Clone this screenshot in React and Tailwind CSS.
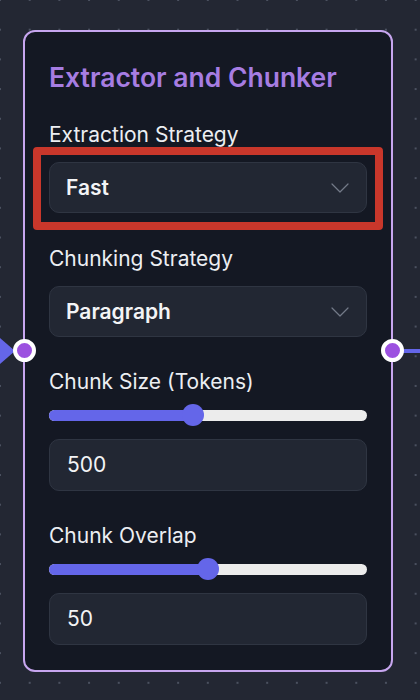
import React from "react";
import { ChevronDown } from "lucide-react";

const font = { fontFamily: "Inter, 'Noto Sans', sans-serif" };

function Select({ value }) {
  return (
    <div className="flex h-[51px] items-center justify-between rounded-[10px] border border-[#2f3542] bg-[#222733] pl-[16px] pr-[10px]">
      <span className="text-[21px] font-semibold leading-[24px] text-[#f3f4f6]">{value}</span>
      <ChevronDown size={32} strokeWidth={0.9} className="text-[#737a88]" />
    </div>
  );
}

function Slider({ pct }) {
  return (
    <div className="relative flex h-[22px] items-center">
      <div className="relative h-[11px] w-full overflow-hidden rounded-full bg-[#ececec]">
        <div className="absolute inset-y-0 left-0 bg-[#6466e9]" style={{ width: pct + "%" }} />
      </div>
      <div
        className="absolute top-0 h-[22px] w-[22px] -translate-x-1/2 rounded-full bg-[#6466e9]"
        style={{ left: pct + "%" }}
      />
    </div>
  );
}

function NumInput({ value }) {
  return (
    <div className="flex h-[52px] items-center rounded-[10px] border border-[#2f3542] bg-[#222733] pl-[17px]">
      <span className="text-[21px] leading-[24px] text-[#f3f4f6]">{value}</span>
    </div>
  );
}

export default function App() {
  return (
    <div
      style={font}
      className="relative h-[700px] w-[420px] overflow-hidden bg-[#232733] bg-[radial-gradient(circle,#4b5160_1px,transparent_1.3px)] bg-[length:29.7px_29.7px] bg-[position:-14.85px_-14.85px] pt-[30px] pl-[23px]"
    >
      {/* edges */}
      <svg className="absolute left-0 top-0" width="420" height="700">
        <polygon points="0,338 15,351 0,364 -4,351" fill="#6466e9" />
        <rect x="398" y="349" width="22" height="4" fill="#6466e9" />
      </svg>

      <div className="relative flex h-[642px] w-[370px] flex-col rounded-[12px] border-2 border-[#c7a6ef] bg-[#141823] px-[24px] pt-[30px]">
        {/* handles */}
        <div className="absolute left-[-12px] top-[307px] h-[23px] w-[23px] rounded-full border-[4px] border-white bg-[#9c51e0]" />
        <div className="absolute right-[-13px] top-[307px] h-[23px] w-[23px] rounded-full border-[4px] border-white bg-[#9c51e0]" />

        <h1 className="text-[26.5px] font-semibold leading-[30px] text-[#a77de2]">Extractor and Chunker</h1>

        <div className="mt-[31px] text-[21px] leading-[24px] text-[#eceef2]">Extraction Strategy</div>
        <div className="relative mt-[15px]">
          <Select value="Fast" />
          <div className="pointer-events-none absolute bottom-[-17px] left-[-16px] right-[-16px] top-[-15px] rounded-[4px] border-[8px] border-[#c9372b]" />
        </div>

        <div className="mt-[34px] text-[21px] leading-[24px] text-[#eceef2]">Chunking Strategy</div>
        <div className="mt-[15px]">
          <Select value="Paragraph" />
        </div>

        <div className="mt-[33px] text-[21px] leading-[24px] text-[#eceef2]">Chunk Size (Tokens)</div>
        <div className="mt-[10px]">
          <Slider pct={45.2} />
        </div>
        <div className="mt-[13px]">
          <NumInput value="500" />
        </div>

        <div className="mt-[33px] text-[21px] leading-[24px] text-[#eceef2]">Chunk Overlap</div>
        <div className="mt-[10px]">
          <Slider pct={50} />
        </div>
        <div className="mt-[13px]">
          <NumInput value="50" />
        </div>
      </div>
    </div>
  );
}
